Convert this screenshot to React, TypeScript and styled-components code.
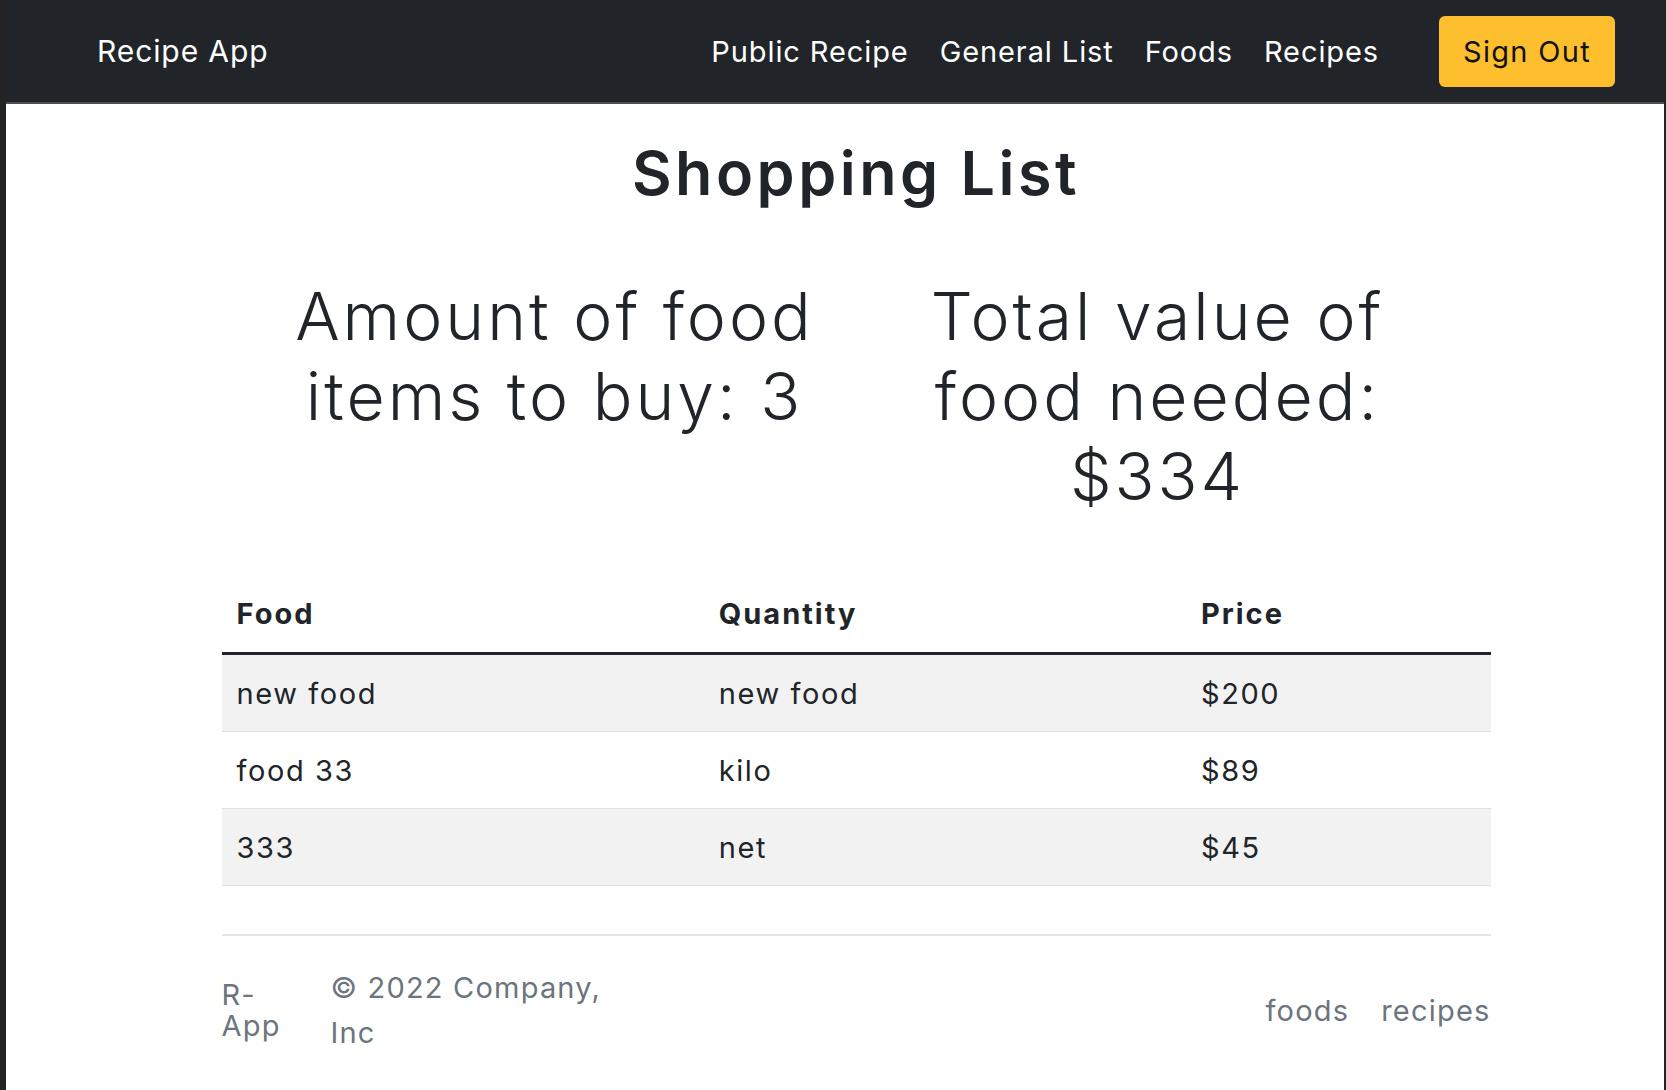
import styled, { createGlobalStyle } from 'styled-components';

const GlobalStyle = createGlobalStyle`
  html, body {
    margin: 0;
    padding: 0;
    background: #232323;
    overflow: hidden;
  }
  body {
    font-family: Inter, "Noto Sans", sans-serif;
    color: #212529;
  }
  * {
    box-sizing: border-box;
  }
`;

const Page = styled.div`
  margin: 0 2px 0 6px;
  min-height: 100vh;
  background: #fff;
`;

const NavBar = styled.nav`
  background: #212529;
  border-bottom: 2px solid #4d4f53;
  padding-left: 42px;
`;

const NavInner = styled.div`
  width: 1518px;
  height: 102px;
  margin: 0 auto;
  display: flex;
  align-items: center;
  justify-content: space-between;
`;

const Brand = styled.a`
  color: #fff;
  font-size: 30px;
  letter-spacing: 0.9px;
  text-decoration: none;
`;

const NavLinks = styled.div`
  display: flex;
  align-items: center;
  gap: 31px;
`;

const NavLink = styled.a`
  color: #fff;
  font-size: 29px;
  letter-spacing: 0.9px;
  text-decoration: none;
`;

const SignOut = styled.button`
  margin-left: 29px;
  width: 176px;
  height: 71px;
  border: none;
  border-radius: 6px;
  background: #fdbf2d;
  color: #111;
  font-family: inherit;
  font-size: 29px;
  letter-spacing: 1.3px;
`;

const Main = styled.main`
  padding-left: 42px;
`;

const Container = styled.div`
  width: 1269px;
  margin: 0 auto;
`;

const Title = styled.h1`
  margin: 33px 0 0;
  text-align: center;
  font-size: 61px;
  font-weight: 600;
  letter-spacing: 3.5px;
  line-height: 72px;
`;

const Summary = styled.div`
  display: grid;
  grid-template-columns: 603px 603px;
  justify-content: center;
  margin-top: 67px;
`;

const SummaryText = styled.h2`
  margin: 0;
  padding: 0 24px;
  text-align: center;
  font-size: 66px;
  font-weight: 300;
  letter-spacing: 3px;
  line-height: 80px;
`;

const Table = styled.table`
  width: 100%;
  margin-top: 59px;
  border-collapse: collapse;
  font-size: 29px;
  line-height: 45px;
  letter-spacing: 1.6px;
`;

const HeadCell = styled.th<{ $w: string }>`
  width: ${({ $w }) => $w};
  padding: 16px 15px;
  text-align: left;
  font-weight: 700;
  letter-spacing: 2px;
  border-bottom: 3px solid #212529;
`;

const Row = styled.tr<{ $striped: boolean }>`
  background: ${({ $striped }) => ($striped ? '#f2f2f2' : '#fff')};
  border-bottom: 1px solid #dee2e6;
`;

const Cell = styled.td`
  padding: 16px 15px 15px;
`;

const Footer = styled.footer`
  margin-top: 48px;
  border-top: 2px solid #e4e7ea;
  padding: 29px 0 28px;
  display: flex;
  align-items: center;
  justify-content: space-between;
  color: #6c757d;
  font-size: 29px;
  letter-spacing: 1.2px;
`;

const FooterLeft = styled.div`
  display: flex;
  align-items: center;
`;

const FooterBrand = styled.a`
  width: 70px;
  margin-right: 39px;
  line-height: 31px;
  color: #6c757d;
  text-decoration: none;
`;

const Copyright = styled.span`
  width: 300px;
  line-height: 45px;
`;

const FooterLinks = styled.ul`
  display: flex;
  gap: 32px;
  margin: 0;
  padding: 0;
  list-style: none;
`;

const FooterLink = styled.a`
  color: #6c757d;
  text-decoration: none;
`;

const items = [
  { food: 'new food', quantity: 'new food', price: '$200' },
  { food: 'food 33', quantity: 'kilo', price: '$89' },
  { food: '333', quantity: 'net', price: '$45' },
];

const App = () => {
  const total = items.reduce((sum, i) => sum + Number(i.price.slice(1)), 0);

  return (
    <>
      <GlobalStyle />
      <Page>
        <NavBar>
          <NavInner>
            <Brand href="#">Recipe App</Brand>
            <NavLinks>
              <NavLink href="#">Public Recipe</NavLink>
              <NavLink href="#">General List</NavLink>
              <NavLink href="#">Foods</NavLink>
              <NavLink href="#">Recipes</NavLink>
              <SignOut>Sign Out</SignOut>
            </NavLinks>
          </NavInner>
        </NavBar>
        <Main>
          <Container>
            <Title>Shopping List</Title>
            <Summary>
              <SummaryText>Amount of food items to buy: {items.length}</SummaryText>
              <SummaryText>Total value of food needed: ${total}</SummaryText>
            </Summary>
            <Table>
              <thead>
                <tr>
                  <HeadCell $w="38%">Food</HeadCell>
                  <HeadCell $w="38%">Quantity</HeadCell>
                  <HeadCell $w="24%">Price</HeadCell>
                </tr>
              </thead>
              <tbody>
                {items.map((item, i) => (
                  <Row key={i} $striped={i % 2 === 0}>
                    <Cell>{item.food}</Cell>
                    <Cell>{item.quantity}</Cell>
                    <Cell>{item.price}</Cell>
                  </Row>
                ))}
              </tbody>
            </Table>
            <Footer>
              <FooterLeft>
                <FooterBrand href="#">R-App</FooterBrand>
                <Copyright>© 2022 Company, Inc</Copyright>
              </FooterLeft>
              <FooterLinks>
                <li>
                  <FooterLink href="#">foods</FooterLink>
                </li>
                <li>
                  <FooterLink href="#">recipes</FooterLink>
                </li>
              </FooterLinks>
            </Footer>
          </Container>
        </Main>
      </Page>
    </>
  );
};

export default App;
